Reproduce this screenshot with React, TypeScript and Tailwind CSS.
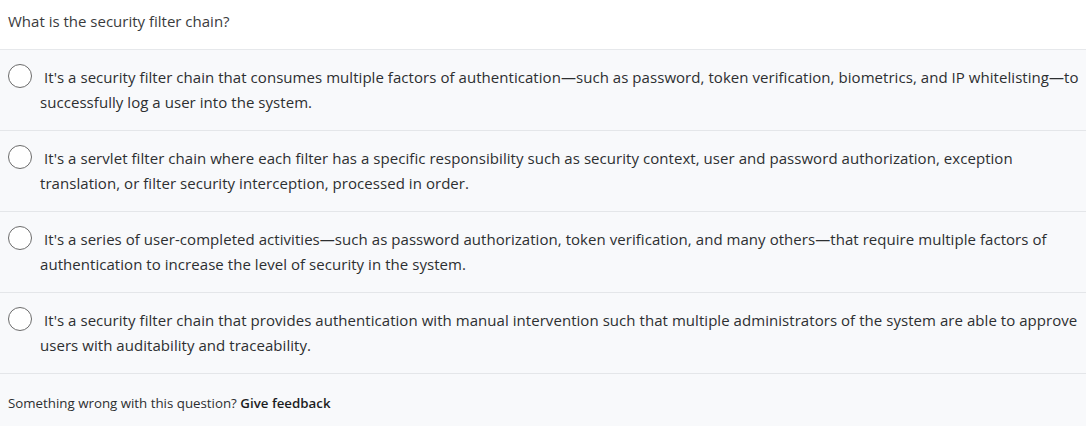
const options = [
    "It's a security filter chain that consumes multiple factors of authentication\u2014such as password, token verification, biometrics, and IP whitelisting\u2014to successfully log a user into the system.",
    "It's a servlet filter chain where each filter has a specific responsibility such as security context, user and password authorization, exception translation, or filter security interception, processed in order.",
    "It's a series of user-completed activities\u2014such as password authorization, token verification, and many others\u2014that require multiple factors of authentication to increase the level of security in the system.",
    "It's a security filter chain that provides authentication with manual intervention such that multiple administrators of the system are able to approve users with auditability and traceability.",
]

function Radio() {
    return (
        <span className="absolute left-[8px] top-[14px] w-[24px] h-[24px] rounded-full border-[1.5px] border-[#6b6b6b] bg-white" />
    )
}

export default function App() {
    return (
        <div
            className="w-[1086px] h-[426px] bg-[#f8f9fb] text-[#2d2f31]"
            style={{ fontFamily: '"Open Sans", "Noto Sans", sans-serif' }}
        >
            <div className="h-[50px] bg-white border-b border-[#e6e8eb] px-[8px] pt-[10px] text-[15px] leading-[22px] text-[#3a3b3d]">
                What is the security filter chain?
            </div>

            {options.map((text, i) => (
                <div
                    key={i}
                    className="relative h-[81px] border-b border-[#e4e6e9] pl-[40px] pr-[4px] pt-[15px] text-[15px] leading-[24.5px] tracking-[0.05px]"
                >
                    <Radio />
                    <p className="indent-[4px]">{text}</p>
                </div>
            ))}

            <div className="px-[8px] pt-[19px] text-[13.3px] leading-[20px] text-[#2d2f31]">
                Something wrong with this question?{' '}
                <span className="font-semibold text-[#1c1d1f]">Give feedback</span>
            </div>
        </div>
    )
}
